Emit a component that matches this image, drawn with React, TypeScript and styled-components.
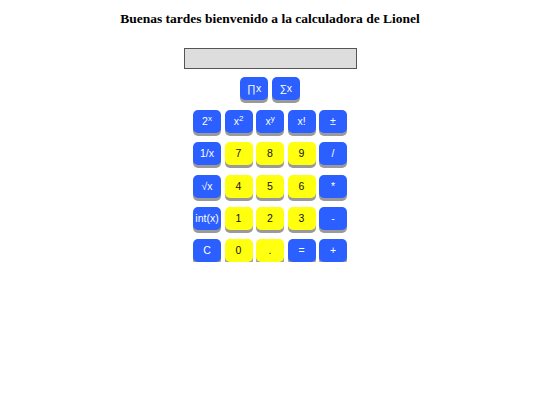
import styled, { createGlobalStyle } from "styled-components";

const GlobalStyle = createGlobalStyle`
  body {
    margin: 8px;
    background: #ffffff;
  }
`;

const Page = styled.div`
  display: flex;
  flex-direction: column;
  align-items: center;
`;

const Title = styled.h3`
  font-family: "Liberation Serif", "Times New Roman", serif;
  font-weight: bold;
  font-size: 13.5px;
  margin: 2px 0 0 0;
  line-height: 17px;
  color: #000;
`;

const Screen = styled.input`
  box-sizing: border-box;
  width: 173px;
  height: 21px;
  margin-top: 21px;
  background: #dddddd;
  border: 1px solid #555;
  padding: 0 4px;
  outline: none;
`;

const TopRow = styled.div`
  display: flex;
  gap: 3.5px;
  margin-top: 8px;
`;

const Grid = styled.div`
  display: grid;
  grid-template-columns: repeat(5, 28px);
  column-gap: 3.5px;
  row-gap: 9.25px;
  margin-top: 10px;
`;

const Key = styled.button<{ $tone?: "blue" | "yellow" }>`
  width: 28px;
  height: 23px;
  padding: 0;
  border: none;
  border-radius: 5px;
  background: ${(p) => (p.$tone === "yellow" ? "#ffff10" : "#2b5fff")};
  color: ${(p) => (p.$tone === "yellow" ? "#111" : "#ffffff")};
  box-shadow: 0 3px 0 #9a9a9a;
  font-family: "Liberation Sans", Arial, sans-serif;
  font-size: 10.5px;
  line-height: 23px;
  white-space: nowrap;
  cursor: pointer;
  sup {
    font-size: 8px;
    line-height: 0;
    vertical-align: 4px;
  }
`;

type KeyDef = { label: React.ReactNode; tone?: "blue" | "yellow" };

const keys: KeyDef[] = [
  { label: <>2<sup>x</sup></> },
  { label: <>x<sup>2</sup></> },
  { label: <>x<sup>y</sup></> },
  { label: "x!" },
  { label: "±" },
  { label: "1/x" },
  { label: "7", tone: "yellow" },
  { label: "8", tone: "yellow" },
  { label: "9", tone: "yellow" },
  { label: "/" },
  { label: "√x" },
  { label: "4", tone: "yellow" },
  { label: "5", tone: "yellow" },
  { label: "6", tone: "yellow" },
  { label: "*" },
  { label: "int(x)" },
  { label: "1", tone: "yellow" },
  { label: "2", tone: "yellow" },
  { label: "3", tone: "yellow" },
  { label: "-" },
  { label: "C" },
  { label: "0", tone: "yellow" },
  { label: ".", tone: "yellow" },
  { label: "=" },
  { label: "+" },
];

export default function App() {
  return (
    <>
      <GlobalStyle />
      <Page>
        <Title>Buenas tardes bienvenido a la calculadora de Lionel</Title>
        <Screen type="text" readOnly />
        <TopRow>
          <Key>∏x</Key>
          <Key>∑x</Key>
        </TopRow>
        <Grid>
          {keys.map((k, i) => (
            <Key key={i} $tone={k.tone}>
              {k.label}
            </Key>
          ))}
        </Grid>
      </Page>
    </>
  );
}
